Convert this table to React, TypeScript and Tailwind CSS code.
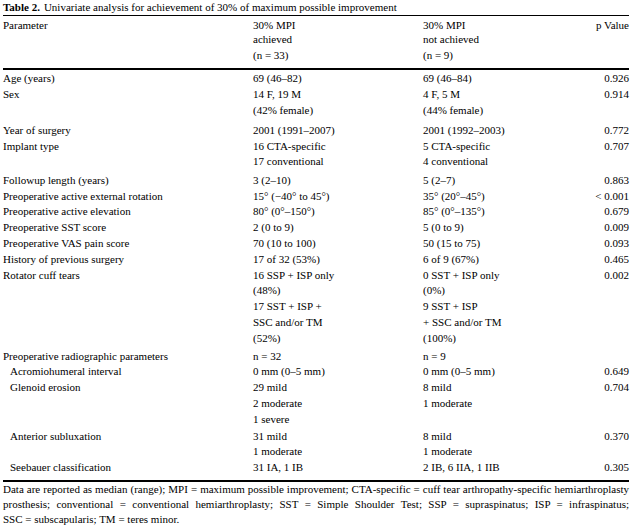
type Row = {
  label: string;
  a: string[];
  b: string[];
  p?: string;
  indent?: boolean;
  pt?: string;
};

const rows: Row[] = [
  { label: 'Age (years)', a: ['69 (46–82)'], b: ['69 (46–84)'], p: '0.926', pt: 'pt-[1px]' },
  { label: 'Sex', a: ['14 F, 19 M', '(42% female)'], b: ['4 F, 5 M', '(44% female)'], p: '0.914' },
  { label: 'Year of surgery', a: ['2001 (1991–2007)'], b: ['2001 (1992–2003)'], p: '0.772', pt: 'pt-[4.5px]' },
  { label: 'Implant type', a: ['16 CTA-specific', '17 conventional'], b: ['5 CTA-specific', '4 conventional'], p: '0.707' },
  { label: 'Followup length (years)', a: ['3 (2–10)'], b: ['5 (2–7)'], p: '0.863', pt: 'pt-[2.5px]' },
  { label: 'Preoperative active external rotation', a: ['15° (−40° to 45°)'], b: ['35° (20°–45°)'], p: '< 0.001' },
  { label: 'Preoperative active elevation', a: ['80° (0°–150°)'], b: ['85° (0°–135°)'], p: '0.679' },
  { label: 'Preoperative SST score', a: ['2 (0 to 9)'], b: ['5 (0 to 9)'], p: '0.009' },
  { label: 'Preoperative VAS pain score', a: ['70 (10 to 100)'], b: ['50 (15 to 75)'], p: '0.093' },
  { label: 'History of previous surgery', a: ['17 of 32 (53%)'], b: ['6 of 9 (67%)'], p: '0.465' },
  {
    label: 'Rotator cuff tears',
    a: ['16 SSP + ISP only', '(48%)', '17 SST + ISP +', 'SSC and/or TM', '(52%)'],
    b: ['0 SST + ISP only', '(0%)', '9 SST + ISP', '+ SSC and/or TM', '(100%)'],
    p: '0.002',
  },
  { label: 'Preoperative radiographic parameters', a: ['n = 32'], b: ['n = 9'], pt: 'pt-[2px]' },
  { label: 'Acromiohumeral interval', a: ['0 mm (0–5 mm)'], b: ['0 mm (0–5 mm)'], p: '0.649', indent: true },
  { label: 'Glenoid erosion', a: ['29 mild', '2 moderate', '1 severe'], b: ['8 mild', '1 moderate'], p: '0.704', indent: true },
  { label: 'Anterior subluxation', a: ['31 mild', '1 moderate'], b: ['8 mild', '1 moderate'], p: '0.370', indent: true, pt: 'pt-[1px]' },
  { label: 'Seebauer classification', a: ['31 IA, 1 IB'], b: ['2 IB, 6 IIA, 1 IIB'], p: '0.305', indent: true },
];

const App = () => {
  return (
    <div className="w-[640px] h-[526px] bg-white px-[3px] font-['Liberation_Serif',serif] text-[11px] text-black overflow-hidden">
      <p className="h-[15px] leading-[14px] whitespace-nowrap">
        <span className="font-bold">Table 2.</span>
        <span className="ml-[4px]">Univariate analysis for achievement of 30% of maximum possible improvement</span>
      </p>

      <div className="w-[626px] border-t border-black">
        {/* header */}
        <div className="grid grid-cols-[250px_170px_1fr_auto] pt-[2px] pb-[5px] border-b-2 border-black">
          <div className="leading-[14px]">Parameter</div>
          <div>
            <div className="leading-[14px]">30% MPI</div>
            <div className="leading-[14px]">achieved</div>
            <div className="leading-[16px] mt-[1px]">(n = 33)</div>
          </div>
          <div>
            <div className="leading-[14px]">30% MPI</div>
            <div className="leading-[14px]">not achieved</div>
            <div className="leading-[16px] mt-[1px]">(n = 9)</div>
          </div>
          <div className="leading-[14px] text-right">p Value</div>
        </div>

        {/* body */}
        <div className="pb-[4px] border-b-2 border-black leading-[15.8px]">
          {rows.map((r) => (
            <div key={r.label} className={`grid grid-cols-[250px_170px_1fr_auto] ${r.pt ?? ''}`}>
              <div className={r.indent ? 'pl-[7px]' : ''}>{r.label}</div>
              <div>
                {r.a.map((t, i) => (
                  <div key={i} className="whitespace-nowrap">{t}</div>
                ))}
              </div>
              <div>
                {r.b.map((t, i) => (
                  <div key={i} className="whitespace-nowrap">{t}</div>
                ))}
              </div>
              <div className="text-right whitespace-nowrap">{r.p ?? ''}</div>
            </div>
          ))}
        </div>

        {/* footnote */}
        <div className="mt-[0.5px] leading-[15px]">
          <p className="text-justify [text-align-last:justify]">
            Data are reported as median (range); MPI = maximum possible improvement; CTA-specific = cuff tear arthropathy-specific hemiarthroplasty
          </p>
          <p className="text-justify [text-align-last:justify]">
            prosthesis; conventional = conventional hemiarthroplasty; SST = Simple Shoulder Test; SSP = supraspinatus; ISP = infraspinatus;
          </p>
          <p>SSC = subscapularis; TM = teres minor.</p>
        </div>
      </div>
    </div>
  );
};

export default App;
